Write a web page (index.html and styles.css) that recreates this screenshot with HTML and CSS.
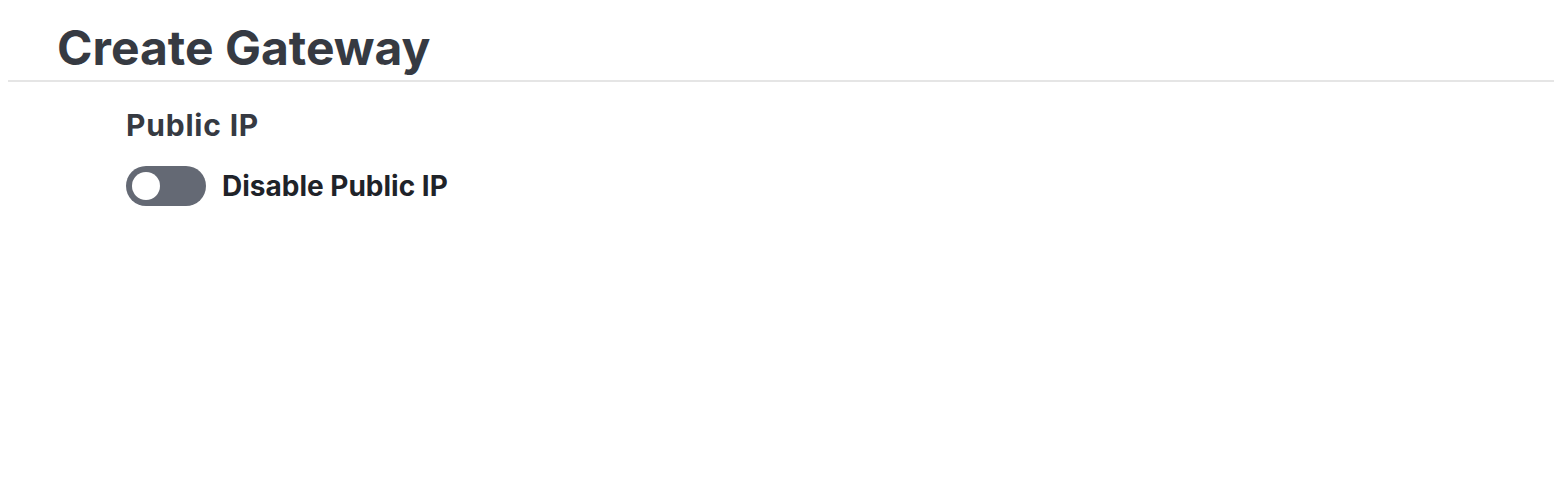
FILE: index.html
```html
<!DOCTYPE html>
<html lang="en">
    <head>
        <meta charset="UTF-8">
        <title>Create Gateway</title>
        <link rel="stylesheet" href="styles.css">
    </head>
    <body>
        <div class="header">
            <h1>Create Gateway</h1>
        </div>
        <div class="form">
            <div class="field">
                <h2>Public IP</h2>
                <label class="switch">
                    <span class="track"><span class="knob"></span></span>
                    <span class="text">Disable Public IP</span>
                </label>
            </div>
        </div>
    </body>
</html>
```

FILE: styles.css
```css
*{
    padding: 0px;
    margin: 0px;
    box-sizing: border-box;
}
body{
    margin: 8px 0 8px 8px;
    font-family: Inter, "Noto Sans", sans-serif;
    background: #fff;
}
.header{
    border-bottom: 2px solid #e5e5e5;
    padding: 12px 0 4px 49px;
}
.header h1{
    font-size: 48px;
    font-weight: 700;
    color: #363a42;
    line-height: 56px;
}
.form{
    padding: 26px 0 0 118px;
}
.field h2{
    font-size: 30px;
    font-weight: 700;
    color: #363a42;
    line-height: 34px;
    letter-spacing: 0.8px;
}
.switch{
    display: flex;
    align-items: center;
    gap: 16px;
    margin-top: 24px;
    cursor: pointer;
}
.track{
    display: flex;
    align-items: center;
    width: 80px;
    height: 40px;
    border-radius: 20px;
    background: #646974;
    padding: 0 6px;
}
.knob{
    width: 28px;
    height: 28px;
    border-radius: 50%;
    background: #fff;
}
.text{
    font-size: 28px;
    font-weight: 700;
    color: #1f2329;
    line-height: 34px;
}
```
